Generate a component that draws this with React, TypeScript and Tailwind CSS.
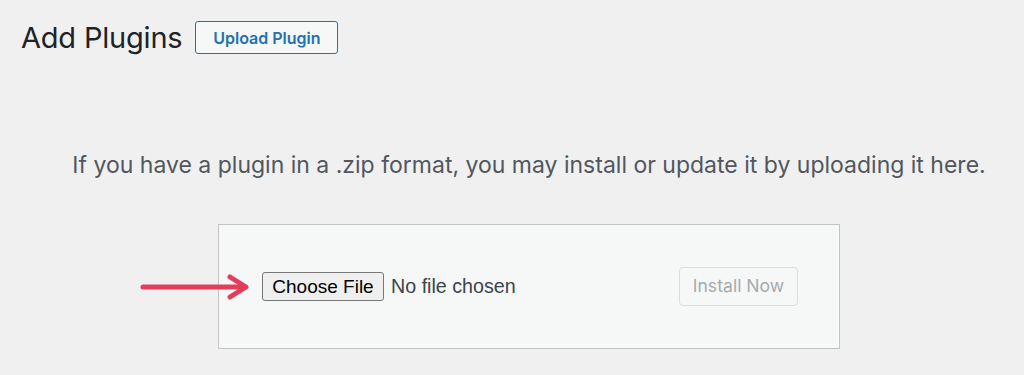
const Arrow = () => (
  <svg width="112" height="28" viewBox="0 0 112 28" className="shrink-0">
    <path d="M4 14 H106" stroke="#e43d5b" strokeWidth="5" strokeLinecap="round" fill="none" />
    <path d="M91 4 L107 14 L91 24" stroke="#e43d5b" strokeWidth="5" strokeLinecap="round" strokeLinejoin="round" fill="none" />
  </svg>
);

export default function App() {
  return (
    <div className="min-h-screen w-[1024px] h-[375px] overflow-hidden bg-[#f0f0f1] font-['Inter','Liberation_Sans',sans-serif]">
      {/* Heading row */}
      <div className="flex items-center gap-[13px] pl-[21px] pt-[21px]">
        <h1 className="text-[29px] leading-[33px] font-normal text-[#1d2327] tracking-[-0.2px]">Add Plugins</h1>
        <button className="h-[33px] w-[143px] rounded-[3px] border border-[#2271b1] bg-[#f6f7f7] text-[16px] font-semibold text-[#2271b1]">
          Upload Plugin
        </button>
      </div>

      {/* Upload form */}
      <div className="ml-[34px] flex flex-col items-center">
        <p className="mt-[97px] text-[23px] leading-[28px] text-[#50575e] whitespace-nowrap">
          If you have a plugin in a .zip format, you may install or update it by uploading it here.
        </p>

        <div className="relative mt-[45px] flex h-[125px] w-[622px] items-center justify-between border border-[#c3c4c7] bg-[#f6f7f7] pl-[43px] pr-[41px]">
          <div className="absolute left-[-80px] top-1/2 -translate-y-1/2">
            <Arrow />
          </div>
          <div className="flex items-center gap-[7px]">
            <button className="h-[29px] w-[122px] rounded-[3px] border border-[#767676] bg-[#efefef] font-['Liberation_Sans',sans-serif] text-[19px] text-black">
              Choose File
            </button>
            <span className="font-['Liberation_Sans',sans-serif] text-[19.7px] text-[#3c434a]">No file chosen</span>
          </div>
          <button className="h-[39px] w-[119px] rounded-[4px] border border-[#dcdcde] bg-[#f6f7f7] text-[17.6px] text-[#a7aaad]">
            Install Now
          </button>
        </div>
      </div>
    </div>
  );
}
